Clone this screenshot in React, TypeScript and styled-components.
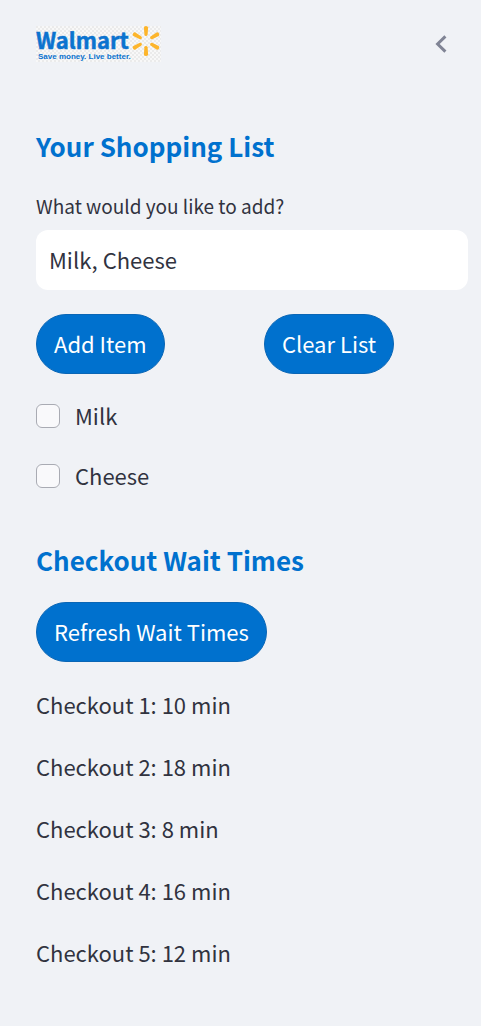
import React, { useState } from "react";
import styled, { createGlobalStyle } from "styled-components";

const GlobalStyle = createGlobalStyle`
  *, *::before, *::after { box-sizing: border-box; }
  body {
    margin: 0;
    background: #f0f2f6;
    color: #31333f;
    font-family: "Source Sans Pro", "Noto Sans CJK SC", sans-serif;
    font-size: 22px;
    line-height: 38px;
  }
`;

const Sidebar = styled.main`
  min-height: 100vh;
  padding: 26px 13px 52px 36px;
`;

const Header = styled.header`
  display: flex;
  align-items: center;
  justify-content: space-between;
  padding-right: 19px;
`;

const Logo = styled.svg`
  display: block;
  width: 125px;
  height: 36px;
  overflow: visible;
`;

const CollapseButton = styled.button`
  display: flex;
  padding: 0;
  border: 0;
  background: none;
  cursor: pointer;
`;

const Section = styled.section<{ $top: number }>`
  display: flex;
  flex-direction: column;
  align-items: stretch;
  margin-top: ${(p) => p.$top}px;
`;

const Heading = styled.h2`
  margin: 0;
  color: #0071ce;
  font-size: 26px;
  font-weight: 600;
  line-height: 36px;
`;

const FieldLabel = styled.label`
  margin-top: 25px;
  font-size: 19px;
  line-height: 34px;
`;

const TextField = styled.input`
  width: 100%;
  height: 60px;
  margin-top: 7px;
  padding: 0 13px 2px;
  border: 0;
  border-radius: 12px;
  background: #ffffff;
  color: inherit;
  font: inherit;
`;

const ButtonRow = styled.div`
  display: grid;
  grid-template-columns: 1fr 1fr;
  gap: 24px;
  margin-top: 24px;
`;

const PillButton = styled.button`
  justify-self: start;
  align-self: flex-start;
  height: 60px;
  padding: 0 17px 2px;
  border: 1px solid #0a66b5;
  border-radius: 30px;
  background: #0071ce;
  color: #ffffff;
  font: inherit;
  white-space: nowrap;
  cursor: pointer;
`;

const RefreshButton = styled(PillButton)`
  margin-top: 24px;
`;

const ItemList = styled.ul`
  display: flex;
  flex-direction: column;
  gap: 22px;
  margin: 22px 0 0;
  padding: 0;
  list-style: none;
`;

const ItemLabel = styled.label`
  display: flex;
  align-items: flex-start;
  gap: 15px;
  cursor: pointer;
`;

const CheckBox = styled.input`
  appearance: none;
  flex: none;
  width: 24px;
  height: 24px;
  margin: 8px 0 0;
  border: 1px solid #a9abb3;
  border-radius: 6px;
  background: #f9f9fb;

  &:checked {
    border-color: #0071ce;
    background: #0071ce;
  }
`;

const WaitList = styled.ul`
  display: flex;
  flex-direction: column;
  gap: 24px;
  margin: 23px 0 0;
  padding: 0;
  list-style: none;
`;

const waits = [10, 18, 8, 16, 12];
const rays = [0, 60, 120, 180, 240, 300];

function WalmartLogo() {
  return (
    <Logo viewBox="0 0 125 36" role="img" aria-label="Walmart">
      <defs>
        <pattern id="checks" width="4" height="4" patternUnits="userSpaceOnUse">
          <rect width="4" height="4" fill="#f8f8f8" />
          <rect width="2" height="2" fill="#ebebeb" />
          <rect x="2" y="2" width="2" height="2" fill="#ebebeb" />
        </pattern>
      </defs>
      <rect width="125" height="36" fill="url(#checks)" />
      <text
        x="0"
        y="23"
        fill="#0b73cf"
        stroke="#0b73cf"
        strokeWidth="0.5"
        fontFamily="'Noto Sans CJK SC', sans-serif"
        fontWeight="700"
        fontSize="22"
      >
        Walmart
      </text>
      <text x="2" y="33" fill="#0b73cf" fontFamily="'Liberation Sans', sans-serif" fontWeight="700" fontSize="8">
        Save money. Live better.
      </text>
      {rays.map((angle) => (
        <path
          key={angle}
          d="M107.9 1.6Q108 0 110 0T112.1 1.6L111.6 8.8Q111.3 10 110 10T108.4 8.8Z"
          transform={`rotate(${angle} 110 15)`}
          fill="#fdb52b"
        />
      ))}
    </Logo>
  );
}

export default function App() {
  const [text, setText] = useState("Milk, Cheese");
  const [items, setItems] = useState(["Milk", "Cheese"]);

  const addItems = () =>
    setItems(text.split(",").map((s) => s.trim()).filter(Boolean));

  return (
    <>
      <GlobalStyle />
      <Sidebar>
        <Header>
          <WalmartLogo />
          <CollapseButton type="button" aria-label="Collapse sidebar">
            <svg width="16" height="20" viewBox="0 0 16 20" fill="none" stroke="#808495" strokeWidth="3">
              <path d="M12.4 2.4 4.6 10l7.8 7.6" />
            </svg>
          </CollapseButton>
        </Header>

        <Section $top={66}>
          <Heading>Your Shopping List</Heading>
          <FieldLabel htmlFor="new-item">What would you like to add?</FieldLabel>
          <TextField id="new-item" type="text" value={text} onChange={(e) => setText(e.target.value)} />
          <ButtonRow>
            <PillButton type="button" onClick={addItems}>Add Item</PillButton>
            <PillButton type="button" onClick={() => setItems([])}>Clear List</PillButton>
          </ButtonRow>
          <ItemList>
            {items.map((item) => (
              <li key={item}>
                <ItemLabel>
                  <CheckBox type="checkbox" />
                  {item}
                </ItemLabel>
              </li>
            ))}
          </ItemList>
        </Section>

        <Section $top={48}>
          <Heading>Checkout Wait Times</Heading>
          <RefreshButton type="button">Refresh Wait Times</RefreshButton>
          <WaitList>
            {waits.map((minutes, i) => (
              <li key={i}>{`Checkout ${i + 1}: ${minutes} min`}</li>
            ))}
          </WaitList>
        </Section>
      </Sidebar>
    </>
  );
}
